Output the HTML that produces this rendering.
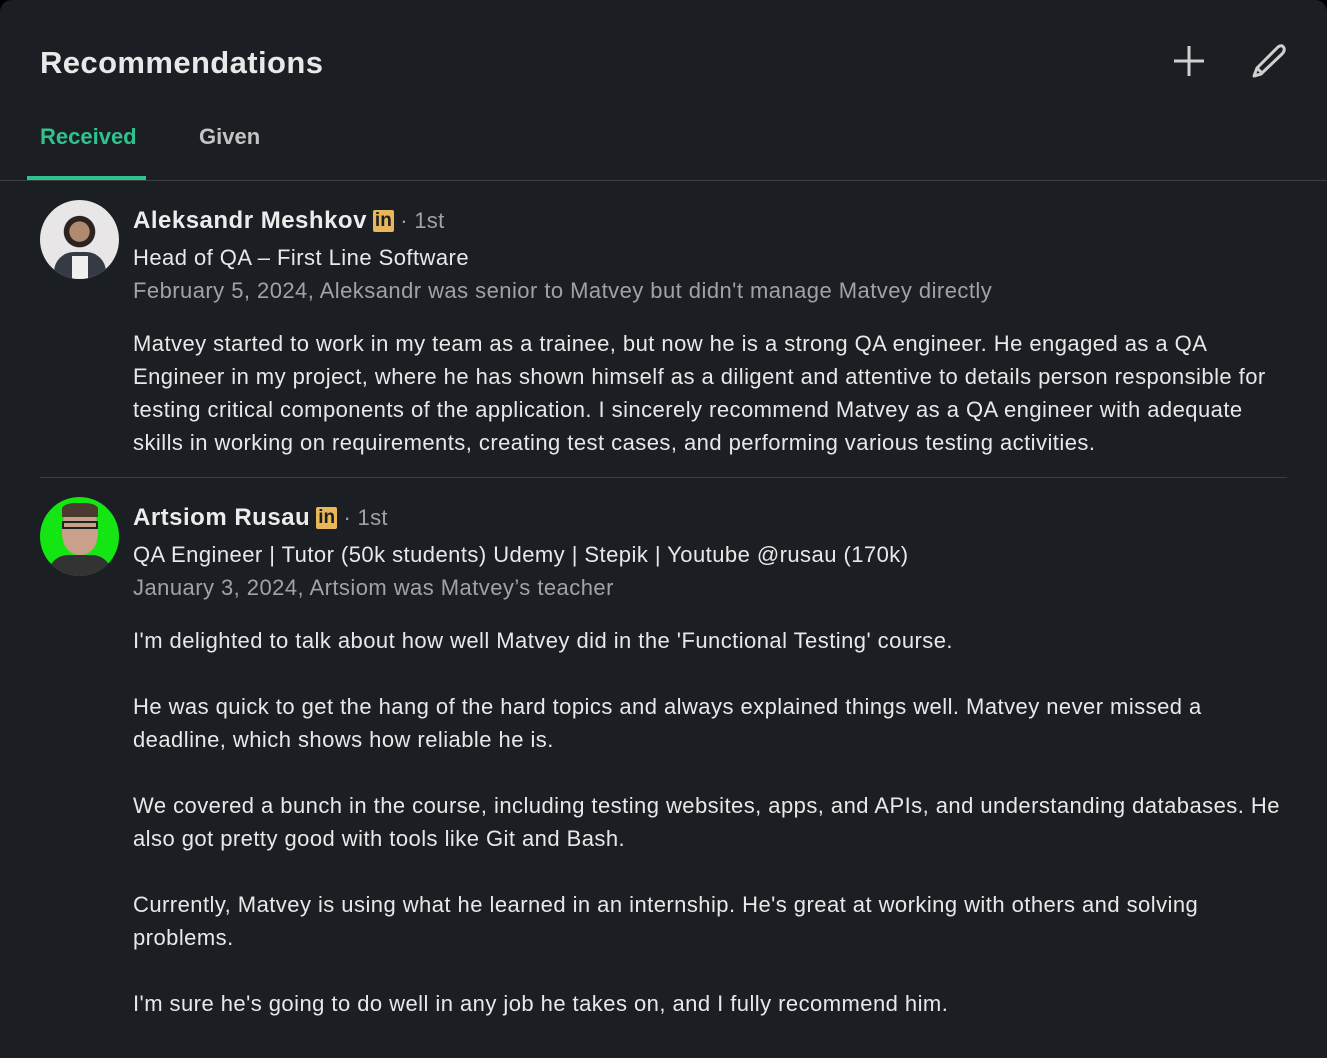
<!DOCTYPE html>
<html><head><meta charset="utf-8"><style>
html,body{margin:0;padding:0;background:#000;}
body{width:1327px;height:1058px;overflow:hidden;font-family:"Liberation Sans",sans-serif;}
.card{position:absolute;left:0;top:0;width:1327px;height:1058px;background:#1b1f23;border-radius:12px 12px 0 0;}
.t{position:absolute;white-space:nowrap;color:#e8e8e8;font-size:22px;letter-spacing:0.45px;}
.g{color:#a0a3a6;}
.n{font-size:24px;font-weight:bold;color:#ececec;letter-spacing:0.5px;}
.in{display:inline-block;background:#e8b75a;color:#1b1f23;font-size:19px;font-weight:bold;padding:0 2px;line-height:22px;border-radius:2px;vertical-align:2px;margin-left:6px;letter-spacing:0;}
.av{position:absolute;width:79px;height:79px;border-radius:50%;overflow:hidden;}
</style></head><body><div class="card">
<div class="t" style="left:40px;top:45px;font-size:31px;font-weight:bold;color:#e8e8e8;letter-spacing:0.4px;">Recommendations</div>
<svg style="position:absolute;left:1172px;top:44px" width="34" height="34"><path d="M17 2V32M2 17H32" stroke="#d0d0d0" stroke-width="3"/></svg>
<svg style="position:absolute;left:1248px;top:42px" width="40" height="38"><path d="M6 34 L9 26 L30 5 Q34 2 36 6 Q37 9 34 12 L13 32 Z M10 27 L14 31" stroke="#d0d0d0" stroke-width="3" fill="none" stroke-linejoin="round"/></svg>
<div class="t" style="left:40px;top:124px;font-size:22px;font-weight:bold;color:#2fc28e;letter-spacing:0;">Received</div>
<div class="t" style="left:199px;top:124px;font-size:22px;font-weight:bold;color:#c4c4c4;letter-spacing:0;">Given</div>
<div style="position:absolute;left:27px;top:176px;width:119px;height:4px;background:#2fc28e"></div>
<div style="position:absolute;left:0;top:180px;width:1327px;height:1px;background:#3a3e42"></div>

<div class="av" style="left:40px;top:200px;background:radial-gradient(circle at 50% 40%,#b08970 0 16%,#2a2320 17% 25%,#e8e6e6 26%);"><div style="position:absolute;left:14px;top:52px;width:52px;height:40px;background:#353a44;border-radius:20px 20px 0 0"></div><div style="position:absolute;left:32px;top:56px;width:16px;height:30px;background:#f0f0f0"></div></div>
<div class="t n" style="left:133px;top:207px;">Aleksandr Meshkov<span class="in">in</span><span class="g" style="font-weight:normal;font-size:22px;letter-spacing:0.3px"> · 1st</span></div>
<div class="t" style="left:133px;top:245px;">Head of QA – First Line Software</div>
<div class="t g" style="left:133px;top:278px;">February 5, 2024, Aleksandr was senior to Matvey but didn't manage Matvey directly</div>
<div class="t" style="left:133px;top:331px;">Matvey started to work in my team as a trainee, but now he is a strong QA engineer. He engaged as a QA</div>
<div class="t" style="left:133px;top:364px;">Engineer in my project, where he has shown himself as a diligent and attentive to details person responsible for</div>
<div class="t" style="left:133px;top:397px;">testing critical components of the application. I sincerely recommend Matvey as a QA engineer with adequate</div>
<div class="t" style="left:133px;top:430px;">skills in working on requirements, creating test cases, and performing various testing activities.</div>
<div style="position:absolute;left:40px;top:477px;width:1247px;height:1px;background:#3a3e42"></div>

<div class="av" style="left:40px;top:497px;background:#14e614;"><div style="position:absolute;left:22px;top:10px;width:36px;height:48px;background:#c9a08a;border-radius:45%"></div><div style="position:absolute;left:22px;top:6px;width:36px;height:14px;background:#4a3a30;border-radius:40% 40% 0 0"></div><div style="position:absolute;left:22px;top:24px;width:36px;height:8px;border:2px solid #222;box-sizing:border-box"></div><div style="position:absolute;left:8px;top:58px;width:64px;height:30px;background:#333;border-radius:20px 20px 0 0"></div></div>
<div class="t n" style="left:133px;top:504px;">Artsiom Rusau<span class="in">in</span><span class="g" style="font-weight:normal;font-size:22px;letter-spacing:0.3px"> · 1st</span></div>
<div class="t" style="left:133px;top:542px;">QA Engineer | Tutor (50k students) Udemy | Stepik | Youtube @rusau (170k)</div>
<div class="t g" style="left:133px;top:575px;">January 3, 2024, Artsiom was Matvey’s teacher</div>
<div class="t" style="left:133px;top:628px;">I'm delighted to talk about how well Matvey did in the 'Functional Testing' course.</div>
<div class="t" style="left:133px;top:694px;">He was quick to get the hang of the hard topics and always explained things well. Matvey never missed a</div>
<div class="t" style="left:133px;top:727px;">deadline, which shows how reliable he is.</div>
<div class="t" style="left:133px;top:793px;">We covered a bunch in the course, including testing websites, apps, and APIs, and understanding databases. He</div>
<div class="t" style="left:133px;top:826px;">also got pretty good with tools like Git and Bash.</div>
<div class="t" style="left:133px;top:892px;">Currently, Matvey is using what he learned in an internship. He's great at working with others and solving</div>
<div class="t" style="left:133px;top:925px;">problems.</div>
<div class="t" style="left:133px;top:991px;">I'm sure he's going to do well in any job he takes on, and I fully recommend him.</div>
</div></body></html>
